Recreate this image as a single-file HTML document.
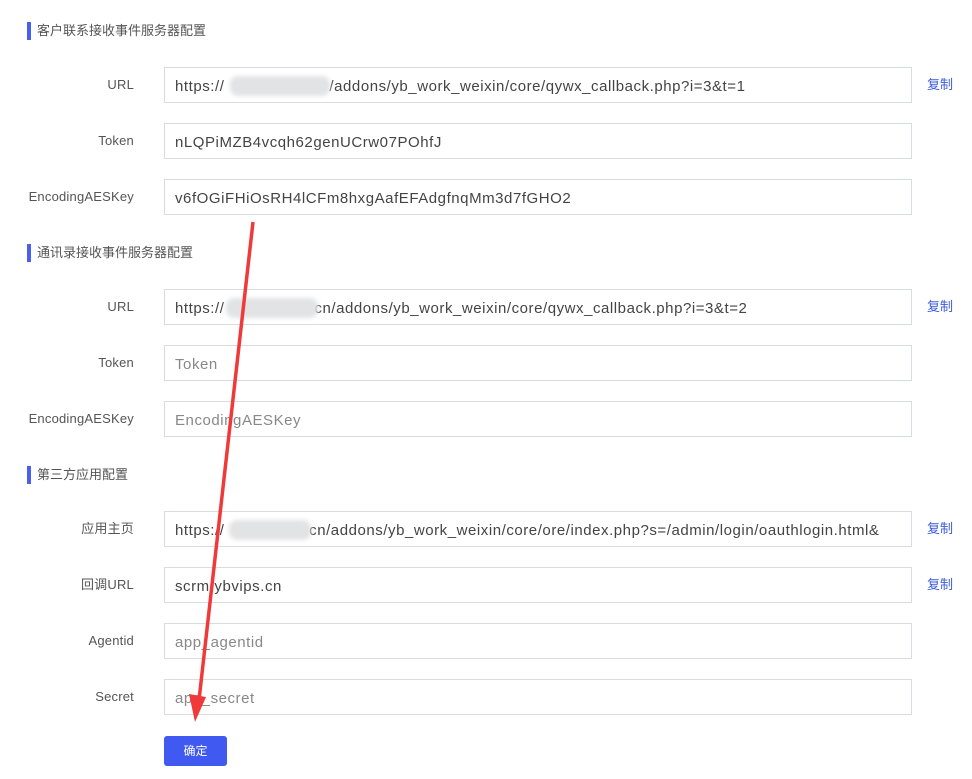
<!DOCTYPE html>
<html><head><meta charset="utf-8"><style>
body{margin:0;width:972px;height:779px;background:#fff;font-family:"Liberation Sans","Noto Sans CJK SC",sans-serif;position:relative;overflow:hidden}
.t{position:absolute;left:27px;height:18px;border-left:4px solid #4a5ef0;padding-left:6px;font-size:13px;color:#555;line-height:18px}
.l{position:absolute;right:838px;font-size:13px;color:#555;line-height:36px;height:36px;white-space:nowrap;letter-spacing:0.2px}
.i{position:absolute;left:164px;width:748px;height:36px;border:1px solid #d8dbe2;font-size:15px;color:#444;line-height:37px;padding-left:10px;box-sizing:border-box;white-space:nowrap;overflow:hidden;letter-spacing:0.55px}
.i.p{color:#888}
.g{display:inline-block}
.c{position:absolute;left:927px;font-size:13px;color:#3b5bdb;line-height:36px}
.b{position:absolute;background:#e2e3e5;border-radius:8px;height:20px;filter:blur(2px)}
.btn{position:absolute;left:164px;top:736px;width:63px;height:30px;background:#4059f0;border-radius:3px;color:#fff;font-size:12px;text-align:center;line-height:30px}
</style></head><body>
<div class="t" style="top:22px">客户联系接收事件服务器配置</div>
<div class="l" style="top:67px">URL</div><div class="i" style="top:67px">https://<span class="g" style="width:105px"></span>/addons/yb_work_weixin/core/qywx_callback.php?i=3&amp;t=1</div><div class="c" style="top:67px">复制</div>
<div class="b" style="left:230px;top:76px;width:100px"></div>
<div class="l" style="top:123px">Token</div><div class="i" style="top:123px">nLQPiMZB4vcqh62genUCrw07POhfJ</div>
<div class="l" style="top:179px">EncodingAESKey</div><div class="i" style="top:179px">v6fOGiFHiOsRH4lCFm8hxgAafEFAdgfnqMm3d7fGHO2</div>
<div class="t" style="top:244px">通讯录接收事件服务器配置</div>
<div class="l" style="top:289px">URL</div><div class="i" style="top:289px">https://<span class="g" style="width:90px"></span>cn/addons/yb_work_weixin/core/qywx_callback.php?i=3&amp;t=2</div><div class="c" style="top:289px">复制</div>
<div class="b" style="left:226px;top:298px;width:92px"></div>
<div class="l" style="top:345px">Token</div><div class="i p" style="top:345px">Token</div>
<div class="l" style="top:401px">EncodingAESKey</div><div class="i p" style="top:401px">EncodingAESKey</div>
<div class="t" style="top:466px">第三方应用配置</div>
<div class="l" style="top:511px">应用主页</div><div class="i" style="top:511px">https://<span class="g" style="width:80px"></span>.cn/addons/yb_work_weixin/core/ore/index.php?s=/admin/login/oauthlogin.html&amp;</div><div class="c" style="top:511px">复制</div>
<div class="b" style="left:229px;top:520px;width:82px"></div>
<div class="l" style="top:567px">回调URL</div><div class="i" style="top:567px">scrm.ybvips.cn</div><div class="c" style="top:567px">复制</div>
<div class="l" style="top:623px">Agentid</div><div class="i p" style="top:623px">app_agentid</div>
<div class="l" style="top:679px">Secret</div><div class="i p" style="top:679px">app_secret</div>
<div class="btn">确定</div>
<svg width="972" height="779" style="position:absolute;left:0;top:0">
<line x1="253" y1="222" x2="199" y2="700" stroke="#f03a3a" stroke-width="3.5"/>
<polygon points="189,694 206,697 195,722" fill="#f03a3a"/>
</svg>
</body></html>
